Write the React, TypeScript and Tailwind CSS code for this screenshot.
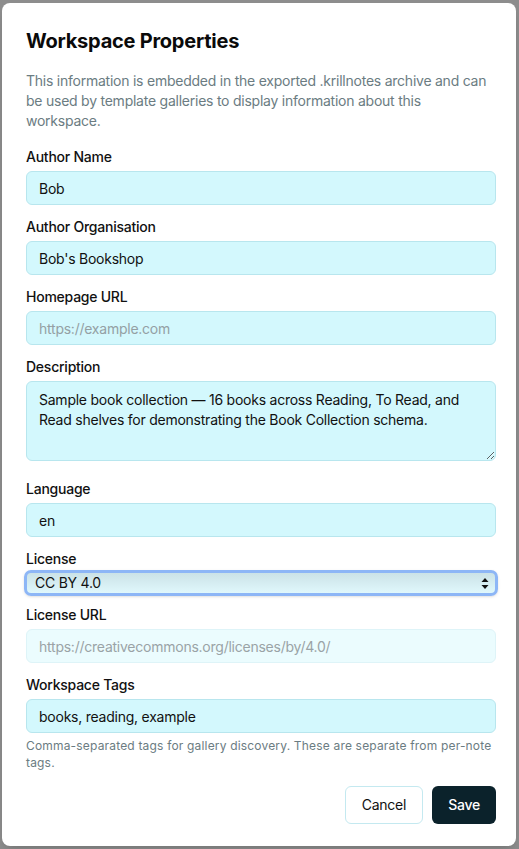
import React from "react";

const FONT = {
  fontFamily: "Inter, 'Noto Sans', sans-serif",
  letterSpacing: "-0.015em",
};

function Field({
  label,
  value,
  placeholder,
  muted,
}: {
  label: string;
  value?: string;
  placeholder?: string;
  muted?: boolean;
}) {
  return (
    <div className="mb-3">
      <label className="block text-sm font-medium text-[#111] leading-5 mb-1">
        {label}
      </label>
      <input
        readOnly
        value={value ?? ""}
        placeholder={placeholder}
        className={
          muted
            ? "block w-full h-[34px] px-3 text-sm rounded-md border border-[#def4f8] bg-[#ebfcfe] text-[#9aa3a6] placeholder:text-[#9aa3a6] outline-none"
            : "block w-full h-[34px] px-3 text-sm rounded-md border border-[#b8e6ee] bg-[#d3f8fd] text-[#111] placeholder:text-[#94a0a4] outline-none"
        }
      />
    </div>
  );
}

export default function App() {
  return (
    <div className="w-[519px] h-[849px] bg-[#8d8d8d] pt-[3px] px-[2px] overflow-hidden" style={FONT}>
      <div className="bg-white rounded-lg w-[514px] h-[843px] pl-6 pr-5 pt-6 shadow-lg">
        <h2 className="text-xl font-bold text-[#0a0a0a] leading-7 mb-4">
          Workspace Properties
        </h2>
        <p className="text-sm text-[#6b7c82] leading-5 mb-4">
          This information is embedded in the exported .krillnotes archive and
          can be used by template galleries to display information about this
          workspace.
        </p>

        <Field label="Author Name" value="Bob" />
        <Field label="Author Organisation" value="Bob's Bookshop" />
        <Field label="Homepage URL" placeholder="https://example.com" />

        <div className="mb-[18px]">
          <label className="block text-sm font-medium text-[#111] leading-5 mb-1">
            Description
          </label>
          <textarea
            readOnly
            rows={3}
            value="Sample book collection — 16 books across Reading, To Read, and Read shelves for demonstrating the Book Collection schema."
            className="block w-full h-[80px] px-3 py-2 text-sm leading-5 rounded-md border border-[#b8e6ee] bg-[#d3f8fd] text-[#111] outline-none resize-y"
          />
        </div>

        <Field label="Language" value="en" />

        <div className="mb-[9px]">
          <label className="block text-sm font-medium text-[#111] leading-5 mb-[1px]">
            License
          </label>
          <div className="relative -mx-[2px] h-[26px] rounded-[7px] border-[3px] border-[#8db6f6] bg-gradient-to-b from-[#cbe2e7] to-[#e0f8fc] shadow-sm">
            <div className="absolute left-2 top-0 h-full flex items-center text-sm text-[#111]">
              CC BY 4.0
            </div>
            <svg
              className="absolute right-[6px] top-[4px]"
              width="8"
              height="13"
              viewBox="0 0 8 13"
            >
              <path d="M4 1 L7.5 5 H0.5 Z" fill="#111" />
              <path d="M4 12 L7.5 8 H0.5 Z" fill="#111" />
            </svg>
          </div>
        </div>

        <Field
          label="License URL"
          placeholder="https://creativecommons.org/licenses/by/4.0/"
          muted
        />

        <div>
          <label className="block text-sm font-medium text-[#111] leading-5 mb-1">
            Workspace Tags
          </label>
          <input
            readOnly
            value="books, reading, example"
            className="block w-full h-[34px] px-3 text-sm rounded-md border border-[#b8e6ee] bg-[#d3f8fd] text-[#111] outline-none"
          />
          <p className="mt-1 text-xs leading-[17px] tracking-[0.015em] text-[#6b7c82]">
            Comma-separated tags for gallery discovery. These are separate from{" "}
            <span className="whitespace-nowrap">per-note</span> tags.
          </p>
        </div>

        <div className="flex justify-end gap-[9px] mt-[15px]">
          <button className="h-[38px] px-4 text-sm rounded-md border border-[#c4e9f0] bg-white text-[#111]">
            Cancel
          </button>
          <button className="h-[38px] px-4 text-sm font-medium rounded-md bg-[#0b222b] text-white">
            Save
          </button>
        </div>
      </div>
    </div>
  );
}
